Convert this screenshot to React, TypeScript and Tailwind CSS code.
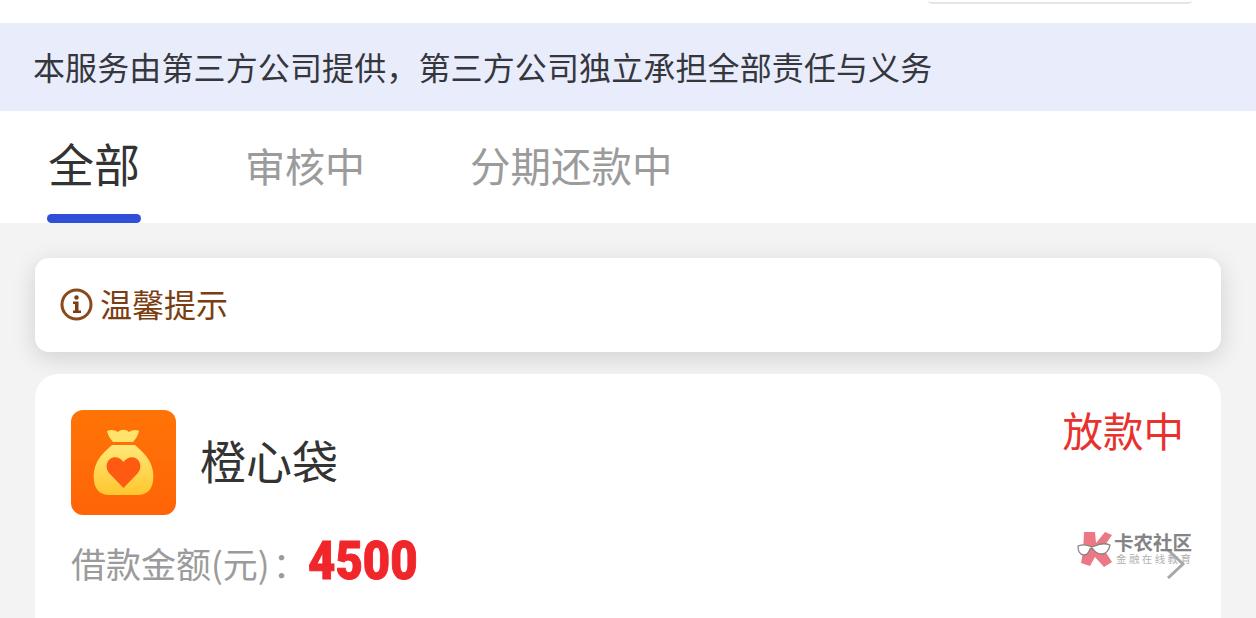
const cjk = "font-['Noto_Sans_CJK_SC','Noto_Sans',sans-serif]";

function BagLogo() {
  return (
    <div className="flex h-[105px] w-[105px] shrink-0 items-center justify-center rounded-[12px] bg-gradient-to-b from-[#ff7406] to-[#ff6408]">
      <svg width="105" height="105" viewBox="0 0 105 105">
        <defs>
          <linearGradient id="bag" x1="0" y1="0" x2="0" y2="1">
            <stop offset="0" stopColor="#ffe878" />
            <stop offset="1" stopColor="#ffc62e" />
          </linearGradient>
        </defs>
        <path d="M36 21c4-2 8-1 11 1 3-3 8-3 11 0 3-2 7-3 10-1-1 4-3 8-6 11H42c-3-3-5-7-6-11z" fill="#ffe36a" />
        <path d="M41 35h23c4 4 11 9 15 17 3 6 4 13 3 19-1 9-7 14-15 14H38c-8 0-14-5-15-14-1-6 0-13 3-19 4-8 11-13 15-17z" fill="url(#bag)" />
        <path d="M52.500 78 39 64c-5-5-4-12 0-15 4-3 10-2 13.500 3 3.500-5 9.500-6 13.500-3 4 3 5 10 0 15z" fill="#ff5a12" />
      </svg>
    </div>
  );
}

function Watermark() {
  return (
    <div className="absolute left-[1042px] top-[157px] flex items-start opacity-90">
      <svg width="36" height="36" viewBox="0 0 36 36" className="shrink-0">
        <path d="M7 1h11l1 11 9-11 7 3-9 13 9 14-8 5-9-10-5 9-9-3 2-11z" fill="#ec6a78" />
        <path d="M1 15c5-2 9-1 11 0 2 1 4 1 6 0 4-2 10-3 15-1-1 5-4 9-8 9s-7-2-9-5c-1-1-2-1-3 0-1 3-3 6-6 6-4 0-6-4-6-9z" fill="#fff" stroke="#777777" strokeWidth="1.300" />
      </svg>
      <div className="ml-[1px] flex flex-col">
        <span className="text-[19.500px] leading-[21px] font-bold text-[#77777a]">卡农社区</span>
        <span className="ml-[2px] mt-[1px] text-[10.500px] leading-[12px] tracking-[2.400px] whitespace-nowrap text-[#a9a9ab]">金融在线教育</span>
      </div>
    </div>
  );
}

export default function App() {
  return (
    <div className={`h-[618px] w-[1256px] overflow-hidden bg-[#f3f3f3] ${cjk}`}>
      <div className="flex h-[23px] justify-end bg-white pr-[64px]">
        <div className="h-[4px] w-[264px] rounded-b-[16px] border-b-2 border-[#e6e6e6]" />
      </div>

      <div className="flex h-[88px] items-center bg-[#e9ecfb] pb-[3px] pl-[33px] text-[32px] tracking-[0.12px] text-[#35373d]">
        本服务由第三方公司提供，第三方公司独立承担全部责任与义务
      </div>

      <div className="flex h-[112px] bg-white pl-[47px]">
        <div className="flex w-[94px] flex-col items-center justify-between">
          <span className="mt-[21px] text-[46px] leading-[60px] whitespace-nowrap text-[#333333]">全部</span>
          <div className="h-[9px] w-[94px] rounded-full bg-[#2f4fd8]" />
        </div>
        <span className="ml-[104px] mt-[27px] text-[40px] leading-[54px] text-[#9b9b9b]">审核中</span>
        <span className="ml-[105px] mt-[27px] text-[40.500px] leading-[54px] text-[#9b9b9b]">分期还款中</span>
      </div>

      <div className="flex flex-col gap-[22px] px-[35px] pt-[35px]">
        <div className="flex h-[94px] items-center rounded-[14px] bg-white pl-[25px] shadow-[0_6px_24px_rgba(0,0,0,0.14)]">
          <svg width="33" height="33" viewBox="0 0 33 33" className="mt-[-2px]">
            <circle cx="16.500" cy="16.500" r="14.500" fill="none" stroke="#8a4a1c" strokeWidth="3" />
            <circle cx="16.500" cy="9.500" r="2.200" fill="#7a3e12" />
            <path d="M13 13.500h5.500v9H21v2.500h-8v-2.500h2v-6.500h-2z" fill="#7a3e12" />
          </svg>
          <span className="ml-[7px] mt-[-4px] text-[32px] leading-[44px] text-[#7a3e12]">温馨提示</span>
        </div>

        <div className="relative h-[300px] rounded-[24px] bg-white px-[36px] pt-[36px]">
          <div className="flex items-start justify-between">
            <div className="flex items-center gap-[24px]">
              <BagLogo />
              <span className="mt-[-8px] text-[46px] leading-[60px] text-[#333333]">橙心袋</span>
            </div>
            <span className="mr-[1px] mt-[-10px] text-[40.500px] leading-[60px] text-[#e8322e]">放款中</span>
          </div>
          <div className="mt-[18px] flex items-center">
            <span className="text-[35px] leading-[60px] text-[#9b9b9b]">借款金额(元)</span>
            <span className="ml-[3px] text-[35px] leading-[60px] text-[#9b9b9b]">：</span>
            <span className="mt-[-4px] origin-left scale-x-[0.875] font-['Roboto',sans-serif] text-[54px] leading-[60px] font-black text-[#f0262a] [-webkit-text-stroke:1px_#f0262a]">
              4500
            </span>
          </div>
          <svg width="20" height="30" viewBox="0 0 20 30" className="absolute left-[1131px] top-[175px]" fill="none" stroke="#a8a8a8" strokeWidth="3">
            <path d="M2 1 17 15 2 29" />
          </svg>
          <Watermark />
        </div>
      </div>
    </div>
  );
}
